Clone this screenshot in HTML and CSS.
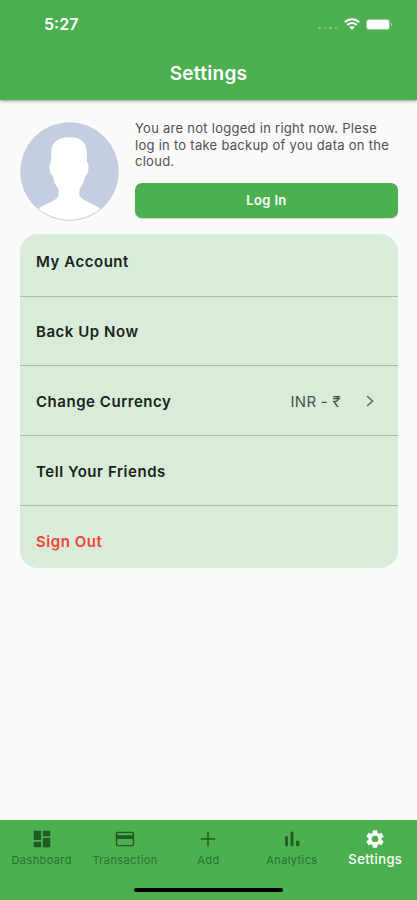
FILE: index.html
```
<!DOCTYPE html>
<html lang="en">
<head>
<meta charset="utf-8">
<title>Settings</title>
<link rel="stylesheet" href="styles.css">
</head>
<body>
<div class="screen">
  <header class="header">
    <div class="status">
      <span class="time">5:27</span>
      <div class="indicators">
        <span class="dots"><i></i><i></i><i></i><i></i></span>
        <svg class="wifi" width="16" height="12" viewBox="0 0 16 12" fill="none" stroke="#fff" stroke-width="2">
          <path d="M.8 4.2C5 .2 11 .2 15.200 4.200M3.300 7C6 4.400 10 4.400 12.700 7"/>
          <path fill="#fff" stroke="none" d="M8 12 5.200 9.100C6.800 7.700 9.200 7.700 10.800 9.100Z"/>
        </svg>
        <span class="battery"></span>
      </div>
    </div>
    <h1 class="title">Settings</h1>
  </header>
  <main class="main">
    <section class="profile">
      <svg class="avatar" width="99" height="99" viewBox="0 0 100 100">
        <defs><clipPath id="disc"><circle cx="50" cy="50" r="49"/></clipPath></defs>
        <circle cx="50" cy="50" r="49.500" fill="#c5cde1"/>
        <path clip-path="url(#disc)" fill="#fff" d="M50 15.500C38 15.500 32 21 31.500 30L31.300 41C29.500 42 29.500 45 30 48C30.500 52 31.500 54 33 54C34 60 36 64 39 68L39 74C38 79 27 82 19 87L19 101H81V87C73 82 62 79 60 74L60 68C63 64 65 60 66 54C68 54 69 50 69.200 46C69.400 43 69 41.500 67.500 41L67.500 31C67.500 21 62 15.500 50 15.500Z"/>
        <circle cx="50" cy="50" r="49.300" fill="none" stroke="#ccced3" stroke-width=".8"/>
      </svg>
      <div class="prompt">
        <p class="message">You are not logged in right now. Plese<br>log in to take backup of you data on the<br>cloud.</p>
        <button class="login">Log In</button>
      </div>
    </section>
    <section class="card">
      <div class="row first"><span class="label">My Account</span></div>
      <div class="row second"><span class="label">Back Up Now</span></div>
      <div class="row"><span class="label">Change Currency</span><span class="value">INR - ₹</span>
        <svg class="chevron" width="8" height="12" viewBox="0 0 8 12" fill="none" stroke="#5d6d60" stroke-width="1.600"><path d="M1 1 6.500 6 1 11"/></svg>
      </div>
      <div class="row"><span class="label">Tell Your Friends</span></div>
      <div class="row last"><span class="label danger">Sign Out</span></div>
    </section>
  </main>
  <footer class="footer">
    <nav class="tabs">
      <div class="tab"><svg viewBox="0 0 24 24"><path d="M3 13h8V3H3zm0 8h8v-6H3zm10 0h8V11h-8zm0-18v6h8V3z"/></svg><span>Dashboard</span></div>
      <div class="tab"><svg viewBox="0 0 24 24"><path d="M20 4H4a2 2 0 0 0-2 2v12a2 2 0 0 0 2 2h16a2 2 0 0 0 2-2V6a2 2 0 0 0-2-2zm.5 13.500a1 1 0 0 1-1 1h-15a1 1 0 0 1-1-1V12h17zm0-9.500h-17V6.500a1 1 0 0 1 1-1h15a1 1 0 0 1 1 1z"/></svg><span>Transaction</span></div>
      <div class="tab"><svg viewBox="0 0 24 24"><path d="M20 12.800h-7.200V20h-1.600v-7.200H4v-1.600h7.200V4h1.600v7.200H20z"/></svg><span>Add</span></div>
      <div class="tab"><svg viewBox="0 0 24 24"><path d="M4.500 9h3v11h-3zm12 5h3.500v6h-3.500zm-6-10h3v16h-3z"/></svg><span>Analytics</span></div>
      <div class="tab active"><svg viewBox="0 0 24 24"><path d="M19.140 12.940c.04-.3.060-.61.060-.94 0-.32-.02-.64-.07-.94l2.030-1.580a.49.49 0 0 0 .12-.61l-1.920-3.320a.488.488 0 0 0-.59-.22l-2.390.96c-.5-.38-1.030-.7-1.620-.94l-.36-2.540a.484.484 0 0 0-.48-.41h-3.840c-.24 0-.43.17-.47.41l-.36 2.540c-.59.24-1.130.57-1.620.94l-2.390-.96c-.22-.08-.47 0-.59.22L2.740 8.870c-.12.21-.08.47.12.61l2.030 1.580c-.05.3-.09.63-.09.94s.02.64.07.94l-2.030 1.580a.49.49 0 0 0-.12.61l1.920 3.320c.12.22.37.29.59.22l2.390-.96c.5.38 1.030.7 1.620.94l.36 2.540c.05.24.24.41.48.41h3.840c.24 0 .44-.17.47-.41l.36-2.540c.59-.24 1.130-.56 1.620-.94l2.390.96c.22.08.47 0 .59-.22l1.920-3.320c.12-.22.07-.47-.12-.61zM12 15.600A3.600 3.600 0 1 1 12 8.400a3.600 3.600 0 0 1 0 7.200z"/></svg><span>Settings</span></div>
    </nav>
    <div class="home"></div>
  </footer>
</div>
</body>
</html>
```
FILE: styles.css
```
* { box-sizing: border-box; }
body { margin: 0; font-family: Inter, "Liberation Sans", sans-serif; background: #fafafa; }
.screen { display: flex; flex-direction: column; width: 417px; height: 900px; overflow: hidden; }
.header { height: 100px; background: #4caf50; color: #fff; box-shadow: 0 1px 3px rgba(0, 0, 0, .4); }
.status { display: flex; justify-content: space-between; align-items: center; height: 48px; padding: 0 25px 0 44px; }
.time { font-size: 16px; font-weight: 600; line-height: 20px; }
.indicators { display: flex; align-items: center; }
.dots { display: flex; gap: 3px; margin: 8px 7px 0 0; }
.dots i { width: 2.500px; height: 2px; border-radius: 1px; background: rgba(255, 255, 255, .35); }
.battery { position: relative; width: 24px; height: 11px; margin: 0 2px 0 6px; border-radius: 3px; background: #fff; border: 1px solid #8fcd92; }
.battery::after { content: ""; position: absolute; right: -3px; top: 3px; width: 1px; height: 3px; background: #a5d6a7; }
.title { margin: 14px 0 0; font-size: 19px; line-height: 24px; font-weight: 600; letter-spacing: .3px; text-align: center; }
.main { flex: 1; padding: 20px 19px 0 20px; }
.profile { display: flex; gap: 16px; height: 100px; margin-top: 1px; }
.avatar { flex: none; margin-top: 1px; }
.prompt { flex: 1; min-width: 0; }
.message { margin: -1px 0 13px; height: 50px; font-size: 13px; line-height: 16.500px; letter-spacing: .27px; color: #505050; white-space: nowrap; }
.login { display: block; width: 263px; height: 35px; padding: 0; border: 0; border-radius: 7px; background: #4caf50; color: #fff; font: 600 13px/35px Inter, sans-serif; letter-spacing: .35px; box-shadow: 0 1px 1px rgba(0, 0, 0, .15); }
.card { margin-top: 13px; border-radius: 18px; background: #d9ecda; overflow: hidden; }
.row { display: flex; align-items: center; height: 70px; padding: 1px 24px 0 16px; border-bottom: 1px solid #a9bfab; color: #1a231b; }
.first { height: 63px; padding-bottom: 8px; }
.second { height: 69px; }
.last { height: 62px; padding-bottom: 0; border: 0; padding-top: 8px; }
.label { font-size: 15px; font-weight: 600; line-height: 20px; letter-spacing: .54px; }
.first .label, .row:nth-child(n+3) .label, .value { padding-top: 1px; }
.danger { color: #f44336; }
.value { margin-left: auto; font-size: 15px; letter-spacing: .3px; color: #465148; }
.chevron { margin-left: 25px; }
.footer { display: flex; flex-direction: column; align-items: center; height: 80px; background: #4caf50; }
.tabs { display: grid; grid-template-columns: repeat(5, 1fr); width: 100%; height: 68px; padding-top: 8px; }
.tab { display: flex; flex-direction: column; align-items: center; color: #23752b; font-size: 11px; line-height: 16px; letter-spacing: .4px; }
.tab svg { width: 22px; height: 22px; fill: #1d5b23; }
.tab span { margin-top: 2px; }
.active { color: #fff; font-size: 13px; font-weight: 500; letter-spacing: .4px; }
.active svg { fill: #fff; }
.active span { margin-top: 1px; }
.home { width: 149px; height: 4px; border-radius: 2px; background: #000; }
```
